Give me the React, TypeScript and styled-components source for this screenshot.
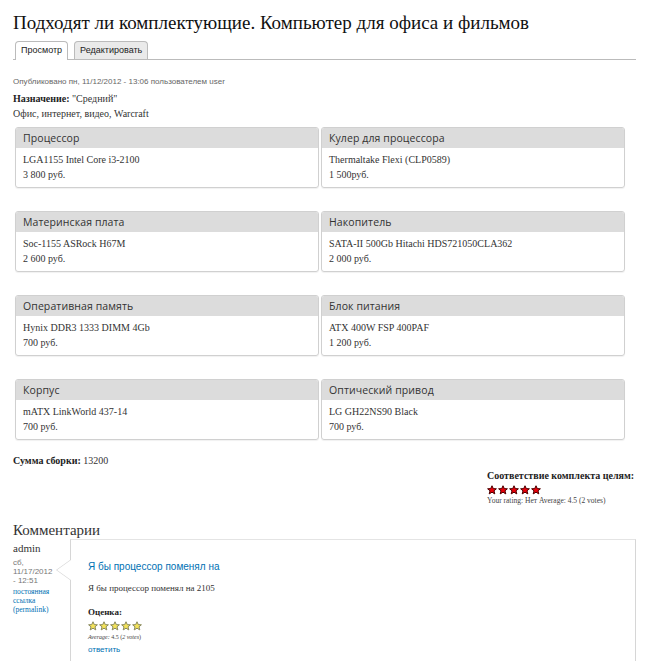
import React from "react";
import styled, { createGlobalStyle } from "styled-components";

const GlobalStyle = createGlobalStyle`
  html, body { margin: 0; padding: 0; background: #fff; }
  body { font-family: "Liberation Serif", serif; color: #333; }
`;

const Page = styled.div`
  padding: 12px 14px 0 13px;
  width: 623px;
`;

const Title = styled.h1`
  margin: 0;
  font-family: "Liberation Serif", serif;
  font-weight: normal;
  font-size: 19px;
  line-height: 22px;
  color: #111;
`;

const Tabs = styled.ul`
  list-style: none;
  margin: 7px 0 0;
  padding: 0 0 0 2px;
  display: flex;
  gap: 6px;
  border-bottom: 1px solid #bbb;
`;

const Tab = styled.li<{ $active?: boolean }>`
  font-family: "Liberation Sans", Arial, sans-serif;
  font-size: 9px;
  line-height: 17px;
  padding: 0 5px;
  color: #222;
  border: 1px solid #bbb;
  border-bottom: none;
  border-radius: 4px 4px 0 0;
  background: ${(p) => (p.$active ? "#fff" : "#eaeaea")};
  margin-bottom: ${(p) => (p.$active ? "-1px" : "0")};
  padding-bottom: ${(p) => (p.$active ? "1px" : "0")};
`;

const Meta = styled.div`
  margin-top: 17px;
  font-family: "Liberation Sans", Arial, sans-serif;
  font-size: 8px;
  line-height: 10px;
  color: #666;
`;

const FieldLine = styled.div`
  font-size: 10px;
  line-height: 15px;
  color: #333;
`;

const Fields = styled.div`
  margin-top: 4px;
`;

const Label = styled.b`
  color: #222;
`;

const CardGrid = styled.div`
  display: grid;
  grid-template-columns: 304px 304px;
  column-gap: 2px;
  row-gap: 23px;
  margin-top: 6px;
  padding-left: 2px;
`;

const Card = styled.div`
  border: 1px solid #d0d0d0;
  border-radius: 3px;
  box-shadow: 0 1px 1px rgba(0, 0, 0, 0.06);
  overflow: hidden;
  height: 61px;
  box-sizing: border-box;
`;

const CardHead = styled.div`
  background: #dcdcdc;
  font-family: "Open Sans", "DejaVu Sans", sans-serif;
  font-size: 10.5px;
  line-height: 20px;
  height: 20px;
  padding: 0 7px;
  color: #333;
  letter-spacing: 0.1px;
`;

const CardBody = styled.div`
  padding: 4px 7px 0;
  font-size: 10px;
  line-height: 15px;
  color: #333;
`;

const Sum = styled.div`
  margin-top: 14px;
  font-size: 10px;
  line-height: 14px;
`;

const RatingBlock = styled.div`
  margin: 1px 0 0 474px;
  font-size: 9px;
  color: #333;
`;

const RatingTitle = styled.div`
  font-weight: bold;
  font-size: 10px;
  line-height: 13px;
  color: #222;
`;

const Stars = styled.div<{ $offset?: number }>`
  display: flex;
  gap: 1px;
  height: 11px;
  align-items: center;
  margin-top: ${(p) => p.$offset ?? 0}px;
`;

const RatingText = styled.div`
  font-size: 7.5px;
  line-height: 11px;
  color: #444;
`;

const CommentsTitle = styled.h2`
  margin: 15px 0 0;
  font-weight: normal;
  font-size: 15px;
  line-height: 18px;
  color: #333;
`;

const Comment = styled.div`
  display: flex;
`;

const Author = styled.div`
  width: 57px;
  flex: none;
  padding-top: 3px;
`;

const AuthorName = styled.div`
  font-size: 11px;
  line-height: 13px;
  color: #333;
`;

const AuthorDate = styled.div`
  font-family: "Liberation Sans", Arial, sans-serif;
  font-size: 8px;
  line-height: 9px;
  color: #777;
  margin-top: 3px;
`;

const Permalink = styled.a`
  display: block;
  font-size: 7.5px;
  line-height: 9px;
  color: #0071b3;
  text-decoration: none;
  margin-top: 2px;
`;

const CommentBox = styled.div`
  position: relative;
  flex: 1;
  height: 130px;
  border-top: 1px solid #e4e4e4;
  border-left: 1px solid #d6d6d6;
  border-right: 1px solid #d6d6d6;
  padding: 20px 17px 0;
  box-sizing: border-box;

  &::before,
  &::after {
    content: "";
    position: absolute;
    top: 20px;
    width: 0;
    height: 0;
    border-top: 10px solid transparent;
    border-bottom: 10px solid transparent;
  }
  &::before {
    left: -15px;
    border-right: 14px solid #d6d6d6;
  }
  &::after {
    left: -14px;
    border-right: 14px solid #fff;
  }
`;

const CommentTitle = styled.a`
  display: block;
  font-family: "Liberation Sans", Arial, sans-serif;
  font-size: 10px;
  line-height: 14px;
  color: #0071b3;
  text-decoration: none;
`;

const CommentText = styled.div`
  margin-top: 8px;
  font-size: 9px;
  line-height: 12px;
  color: #333;
`;

const ScoreLabel = styled.div`
  margin: 12px 0 2px;
  font-size: 9px;
  font-weight: bold;
  line-height: 12px;
  color: #222;
`;

const SmallAvg = styled.div`
  margin-top: 1px;
  font-size: 6px;
  line-height: 10px;
  color: #444;
`;

const Reply = styled.a`
  display: block;
  margin-top: 2px;
  font-family: "Liberation Sans", Arial, sans-serif;
  font-size: 8px;
  line-height: 11px;
  color: #0071b3;
  text-decoration: none;
`;

const Star: React.FC<{ color: "red" | "yellow" }> = ({ color }) => {
  const fill = color === "red" ? "#e8000b" : "#f3e25a";
  const stroke = color === "red" ? "#4a0000" : "#8a8a60";
  return (
    <svg width="10" height="10" viewBox="0 0 20 20">
      <polygon
        points="10,1.5 12.6,7.2 18.8,7.6 14,11.6 15.6,17.8 10,14.4 4.4,17.8 6,11.6 1.2,7.6 7.4,7.2"
        fill={fill}
        stroke={stroke}
        strokeWidth="2"
        strokeLinejoin="round"
      />
    </svg>
  );
};

const parts = [
  ["Процессор", "LGA1155 Intel Core i3-2100", "3 800 руб."],
  ["Кулер для процессора", "Thermaltake Flexi (CLP0589)", "1 500руб."],
  ["Материнская плата", "Soc-1155 ASRock H67M", "2 600 руб."],
  ["Накопитель", "SATA-II 500Gb Hitachi HDS721050CLA362", "2 000 руб."],
  ["Оперативная память", "Hynix DDR3 1333 DIMM 4Gb", "700 руб."],
  ["Блок питания", "ATX 400W FSP 400PAF", "1 200 руб."],
  ["Корпус", "mATX LinkWorld 437-14", "700 руб."],
  ["Оптический привод", "LG GH22NS90 Black", "700 руб."],
];

export default function App() {
  return (
    <>
      <GlobalStyle />
      <Page>
        <Title>Подходят ли комплектующие. Компьютер для офиса и фильмов</Title>
        <Tabs>
          <Tab $active>Просмотр</Tab>
          <Tab>Редактировать</Tab>
        </Tabs>
        <Meta>Опубликовано пн, 11/12/2012 - 13:06 пользователем user</Meta>
        <Fields>
          <FieldLine>
            <Label>Назначение:</Label> "Средний"
          </FieldLine>
          <FieldLine>Офис, интернет, видео, Warcraft</FieldLine>
        </Fields>
        <CardGrid>
          {parts.map(([head, name, price]) => (
            <Card key={head}>
              <CardHead>{head}</CardHead>
              <CardBody>
                {name}
                <br />
                {price}
              </CardBody>
            </Card>
          ))}
        </CardGrid>
        <Sum>
          <Label>Сумма сборки:</Label> 13200
        </Sum>
        <RatingBlock>
          <RatingTitle>Соответствие комплекта целям:</RatingTitle>
          <Stars $offset={2}>
            {[0, 1, 2, 3, 4].map((i) => (
              <Star key={i} color="red" />
            ))}
          </Stars>
          <RatingText>Your rating: Нет Average: 4.5 (2 votes)</RatingText>
        </RatingBlock>
        <CommentsTitle>Комментарии</CommentsTitle>
        <Comment>
          <Author>
            <AuthorName>admin</AuthorName>
            <AuthorDate>
              сб,
              <br />
              11/17/2012
              <br />- 12:51
            </AuthorDate>
            <Permalink href="#">
              постоянная
              <br />
              ссылка
              <br />
              (permalink)
            </Permalink>
          </Author>
          <CommentBox>
            <CommentTitle href="#">Я бы процессор поменял на</CommentTitle>
            <CommentText>Я бы процессор поменял на 2105</CommentText>
            <ScoreLabel>Оценка:</ScoreLabel>
            <Stars>
              {[0, 1, 2, 3, 4].map((i) => (
                <Star key={i} color="yellow" />
              ))}
            </Stars>
            <SmallAvg>
              <i>Average:</i> 4.5 (<i>2 votes</i>)
            </SmallAvg>
            <Reply href="#">ответить</Reply>
          </CommentBox>
        </Comment>
      </Page>
    </>
  );
}
